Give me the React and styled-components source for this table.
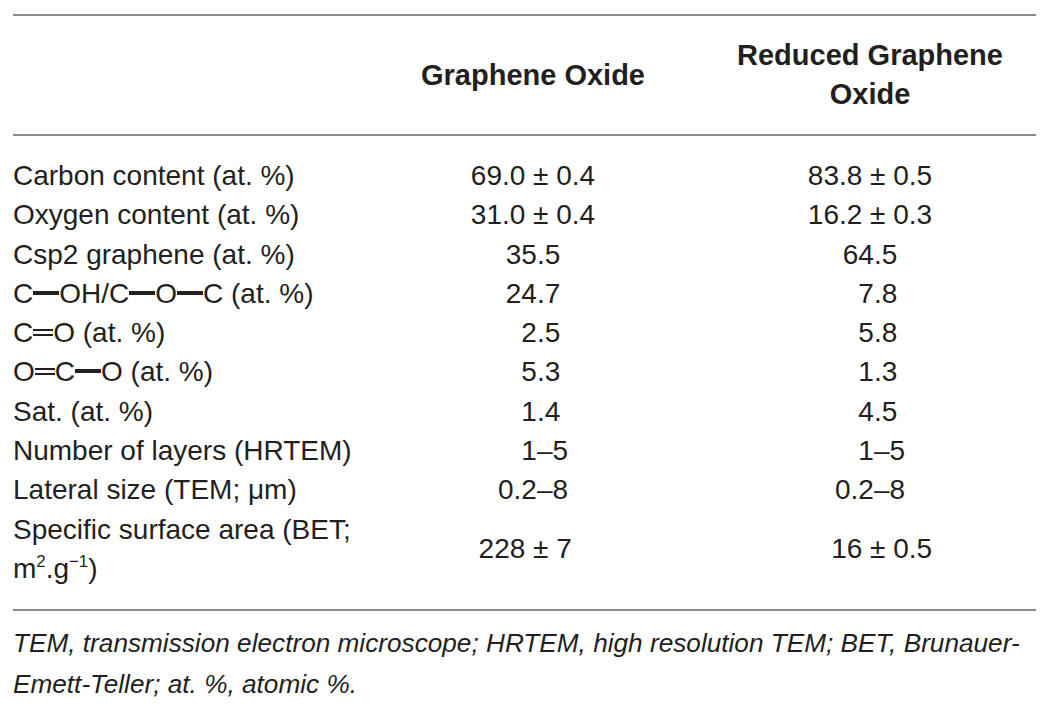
import React from 'react';
import styled, { createGlobalStyle, css } from 'styled-components';

const GlobalStyle = createGlobalStyle`
  html, body {
    margin: 0;
    background: #fff;
  }
`;

const Page = styled.div`
  width: 1023px;
  padding: 14px 0 0 13px;
  font-family: 'Liberation Sans', Arial, Helvetica, sans-serif;
  color: #231f20;
`;

const Rule = styled.div`
  height: 2px;
  background: #8d8d8d;
`;

const Grid = styled.div`
  display: grid;
  grid-template-columns: 395px 250px 1fr;
  align-items: center;
`;

const HeadRow = styled(Grid)`
  height: 118px;
`;

const HeadCell = styled.div`
  padding-left: ${p => p.$indent || 0}px;
  font-size: 29px;
  font-weight: 700;
  line-height: 39px;
  text-align: center;
`;

const Body = styled.div`
  padding: 20px 0 21px;
`;

const Row = styled(Grid)`
  font-size: 28px;
  line-height: 39.3px;
`;

const Label = styled.div`
  white-space: nowrap;
`;

const Value = styled.div`
  padding-left: ${p => p.$indent || 0}px;
  text-align: center;
  white-space: pre;
`;

const Bond = styled.span`
  display: inline-block;
  ${p =>
    p.$double
      ? css`
          width: 20px;
          height: 3px;
          border-top: 2px solid currentColor;
          border-bottom: 2px solid currentColor;
          vertical-align: calc(0.36em - 3.5px);
        `
      : css`
          width: 26px;
          height: 4px;
          background: currentColor;
          vertical-align: calc(0.36em - 2px);
        `}
`;

const Sup = styled.sup`
  font-size: 0.6em;
  line-height: 0;
  vertical-align: 0.65em;
`;

const Note = styled.p`
  margin: 12px 0 0;
  font-size: 26.2px;
  font-style: italic;
  line-height: 41px;
`;

// figure space keeps short numbers lined up with the longer ones
const F = '\u2007';
const P = '\u2008';

const rows = [
  { label: 'Carbon content (at. %)', go: '69.0 ± 0.4', rgo: '83.8 ± 0.5' },
  { label: 'Oxygen content (at. %)', go: '31.0 ± 0.4', rgo: '16.2 ± 0.3' },
  { label: 'Csp2 graphene (at. %)', go: '35.5', rgo: '64.5' },
  {
    label: (
      <>
        C<Bond />OH/C<Bond />O<Bond />C (at. %)
      </>
    ),
    go: '24.7',
    rgo: `${F}7.8`,
  },
  {
    label: (
      <>
        C<Bond $double />O (at. %)
      </>
    ),
    go: `${F}2.5`,
    rgo: `${F}5.8`,
  },
  {
    label: (
      <>
        O<Bond $double />C<Bond />O (at. %)
      </>
    ),
    go: `${F}5.3`,
    rgo: `${F}1.3`,
  },
  { label: 'Sat. (at. %)', go: `${F}1.4`, rgo: `${F}4.5` },
  { label: 'Number of layers (HRTEM)', go: `${F}${P}1–5`, rgo: `${F}${P}1–5` },
  { label: 'Lateral size (TEM; μm)', go: '0.2–8', rgo: '0.2–8' },
  {
    label: (
      <>
        Specific surface area (BET;
        <br />
        m<Sup>2</Sup>.g<Sup>−1</Sup>)
      </>
    ),
    go: `228 ± 7${F}`,
    rgo: `${F}${P}16 ± 0.5`,
  },
];

export default function App() {
  return (
    <>
      <GlobalStyle />
      <Page>
        <Rule />
        <HeadRow>
          <div />
          <HeadCell>Graphene Oxide</HeadCell>
          <HeadCell $indent={46}>
            Reduced Graphene
            <br />
            Oxide
          </HeadCell>
        </HeadRow>
        <Rule />
        <Body>
          {rows.map((r, i) => (
            <Row key={i}>
              <Label>{r.label}</Label>
              <Value>{r.go}</Value>
              <Value $indent={46}>{r.rgo}</Value>
            </Row>
          ))}
        </Body>
        <Rule />
        <Note>
          TEM, transmission electron microscope; HRTEM, high resolution TEM; BET, Brunauer-
          <br />
          Emett-Teller; at. %, atomic %.
        </Note>
      </Page>
    </>
  );
}
